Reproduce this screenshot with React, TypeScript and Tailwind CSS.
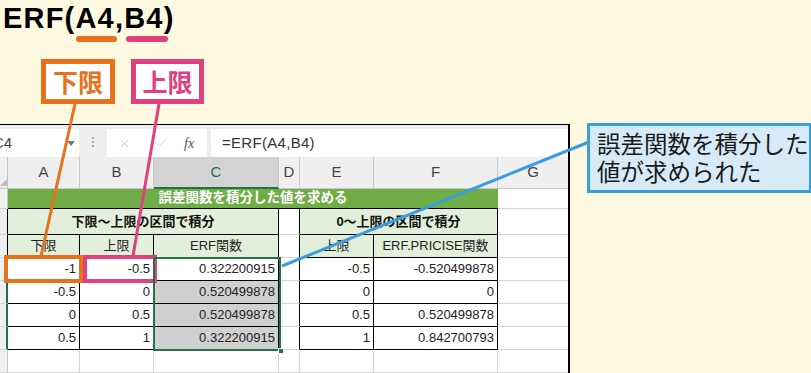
import { Check, X } from "lucide-react";

const font = "font-['Liberation_Sans','Noto_Sans_CJK_JP',sans-serif]";

/**
 * Row header cell (the cut-off row numbers on the far left)
 */
function RowHead({ className = "" }: { className?: string }) {
  return <div className={`w-[8px] shrink-0 bg-[#efefef] border-b border-[#d4d4d4] ${className}`} />;
}

function DataRow({
  a,
  b,
  c,
  e,
  f,
  gray,
}: {
  a: string;
  b: string;
  c: string;
  e: string;
  f: string;
  gray?: boolean;
}) {
  return (
    <div className="flex h-[23px] text-[13px] text-[#222]">
      <RowHead className="border-r-2 border-r-[#217346] bg-[#d6d6d6]" />
      <div className="w-[72px] flex items-center justify-end pr-[3px] bg-white border-r border-b border-black">{a}</div>
      <div className="w-[74px] flex items-center justify-end pr-[3px] bg-white border-r border-b border-black">{b}</div>
      <div
        className={`w-[125px] flex items-center justify-end pr-[3px] border-r border-b border-black ${
          gray ? "bg-[#d0d0d0]" : "bg-white"
        }`}
      >
        {c}
      </div>
      <div className="w-[21px] bg-white border-r border-r-black border-b border-b-[#d4d4d4]" />
      <div className="w-[74px] flex items-center justify-end pr-[3px] bg-white border-r border-b border-black">{e}</div>
      <div className="w-[124px] flex items-center justify-end pr-[3px] bg-white border-r border-b border-black">{f}</div>
      <div className="w-[70px] bg-white border-b border-[#d4d4d4]" />
    </div>
  );
}

function Spreadsheet() {
  return (
    <div className={`w-[570px] h-[249px] shrink-0 border-t border-r-2 border-black bg-white ${font}`}>
      {/* formula bar */}
      <div className="flex h-[32px] pt-[4px] bg-[#eeeeee]">
        <div className="w-[79px] h-[28px] bg-white flex items-center overflow-hidden relative">
          <span className="ml-[-7px] text-[15px] text-[#444]">C4</span>
          <span className="absolute left-[67px] top-[12px] border-x-[4px] border-x-transparent border-t-[5px] border-t-[#777]" />
        </div>
        <div className="w-[28px] flex flex-col items-center justify-center gap-[2px] pb-[2px]">
          <span className="w-[2px] h-[2px] bg-[#aaa]" />
          <span className="w-[2px] h-[2px] bg-[#aaa]" />
          <span className="w-[2px] h-[2px] bg-[#aaa]" />
        </div>
        <div className="w-[100px] h-[28px] bg-white flex items-center">
          <X className="ml-[11px] w-[13px] h-[13px] text-[#bdbdbd]" strokeWidth={1.6} />
          <Check className="ml-[23px] w-[14px] h-[14px] text-[#d0d0d0]" strokeWidth={1.6} />
          <span className="ml-[16px] font-['Liberation_Serif',serif] italic text-[14px] text-[#555]">fx</span>
        </div>
        <div className="ml-[4px] w-[357px] h-[28px] bg-white flex items-center pl-[11px] text-[15px] text-[#333] tracking-[0.3px]">
          =ERF(A4,B4)
        </div>
      </div>

      {/* column headers */}
      <div className="flex h-[32px] text-[15px] text-[#444]">
        <div className="w-[8px] bg-[#efefef] border-r border-b border-[#c6c6c6] flex items-end justify-end">
          <span className="border-l-[7px] border-l-transparent border-b-[7px] border-b-[#bdbdbd] mb-[2px]" />
        </div>
        <div className="w-[72px] flex items-center justify-center bg-[#efefef] border-r border-b border-[#c9c9c9]">A</div>
        <div className="w-[74px] flex items-center justify-center bg-[#efefef] border-r border-b border-[#c9c9c9]">B</div>
        <div className="w-[125px] flex items-center justify-center bg-[#d4d4d4] border-r border-r-[#c9c9c9] border-b-2 border-b-[#217346] text-[#217346]">
          C
        </div>
        <div className="w-[21px] flex items-center justify-center bg-[#efefef] border-r border-b border-[#c9c9c9]">D</div>
        <div className="w-[74px] flex items-center justify-center bg-[#efefef] border-r border-b border-[#c9c9c9]">E</div>
        <div className="w-[124px] flex items-center justify-center bg-[#efefef] border-r border-b border-[#c9c9c9]">F</div>
        <div className="w-[70px] flex items-center justify-center bg-[#efefef] border-b border-[#c9c9c9]">G</div>
      </div>

      {/* row 1: title banner */}
      <div className="flex h-[20px]">
        <RowHead className="border-r border-r-[#c6c6c6]" />
        <div className="w-[490px] flex items-center justify-center bg-[#70ad47] border-b border-black text-white font-bold text-[13.5px]">
          誤差関数を積分した値を求める
        </div>
        <div className="w-[70px] bg-white border-b border-[#d4d4d4]" />
      </div>

      {/* row 2 */}
      <div className="flex h-[26px] text-[13px] font-bold text-[#111]">
        <RowHead className="border-r border-r-black" />
        <div className="w-[271px] flex items-center justify-center bg-[#e2efda] border-r border-b border-black">
          下限～上限の区間で積分
        </div>
        <div className="w-[21px] bg-white border-r border-r-black border-b border-b-[#d4d4d4]" />
        <div className="w-[198px] flex items-center justify-center bg-[#e2efda] border-r border-b border-black">
          0～上限の区間で積分
        </div>
        <div className="w-[70px] bg-white border-b border-[#d4d4d4]" />
      </div>

      {/* row 3 */}
      <div className="flex h-[23px] text-[13px] text-[#222]">
        <RowHead className="border-r border-r-black" />
        <div className="w-[72px] flex items-center justify-center bg-[#e2efda] border-r border-b border-black">下限</div>
        <div className="w-[74px] flex items-center justify-center bg-[#e2efda] border-r border-b border-black">上限</div>
        <div className="w-[125px] flex items-center justify-center bg-[#e2efda] border-r border-b border-black">ERF関数</div>
        <div className="w-[21px] bg-white border-r border-r-black border-b border-b-[#d4d4d4]" />
        <div className="w-[74px] flex items-center justify-center bg-[#e2efda] border-r border-b border-black">上限</div>
        <div className="w-[124px] flex items-center justify-center bg-[#e2efda] border-r border-b border-black">
          ERF.PRICISE関数
        </div>
        <div className="w-[70px] bg-white border-b border-[#d4d4d4]" />
      </div>

      <DataRow a="-1" b="-0.5" c="0.322200915" e="-0.5" f="-0.520499878" />
      <DataRow a="-0.5" b="0" c="0.520499878" e="0" f="0" gray />
      <DataRow a="0" b="0.5" c="0.520499878" e="0.5" f="0.520499878" gray />
      <DataRow a="0.5" b="1" c="0.322200915" e="1" f="0.842700793" gray />

      {/* row 8: empty */}
      <div className="flex h-[23px]">
        <RowHead className="border-r border-r-[#c6c6c6]" />
        <div className="w-[72px] border-r border-b border-[#d4d4d4]" />
        <div className="w-[74px] border-r border-b border-[#d4d4d4]" />
        <div className="w-[125px] border-r border-b border-[#d4d4d4]" />
        <div className="w-[21px] border-r border-b border-[#d4d4d4]" />
        <div className="w-[74px] border-r border-b border-[#d4d4d4]" />
        <div className="w-[124px] border-r border-b border-[#d4d4d4]" />
        <div className="w-[70px] border-b border-[#d4d4d4]" />
      </div>
    </div>
  );
}

export default function App() {
  return (
    <div className={`relative w-[811px] h-[373px] overflow-hidden bg-[#fdf9e1] ${font}`}>
      {/* heading */}
      <div className="pl-[3px] h-[37px] text-[29px] leading-[37px] font-bold tracking-[1.2px] text-black font-['Liberation_Sans',sans-serif]">
        ERF(A4,B4)
      </div>
      <div className="flex mt-[-1px] h-[6px]">
        <div className="ml-[76px] w-[41px] rounded-full bg-[#e8711b]" />
        <div className="ml-[9px] w-[42px] rounded-full bg-[#e0407f]" />
      </div>
      <div className="flex mt-[17px] h-[45px]">
        <div className="ml-[41px] w-[74px] border-[5px] border-[#e8711b] bg-white flex items-center justify-center text-[25px] font-bold text-[#e8711b] font-['Noto_Sans_CJK_JP',sans-serif]">
          下限
        </div>
        <div className="ml-[16px] w-[73px] border-[5px] border-[#e0407f] bg-white flex items-center justify-center text-[25px] font-bold text-[#e0407f] font-['Noto_Sans_CJK_JP',sans-serif]">
          上限
        </div>
      </div>

      <div className="flex items-start mt-[20px]">
        <Spreadsheet />
        <div className="ml-[17px] mt-[-1px] w-[240px] h-[70px] border-[3px] border-[#3d9be0] bg-[#d6eaf8] pl-[7px] pt-[3px] text-[23.5px] leading-[28px] text-[#1a1a1a] font-['Noto_Sans_CJK_JP',sans-serif] whitespace-nowrap">
          <div>誤差関数を積分した</div>
          <div>値が求められた</div>
        </div>
      </div>

      {/* highlight frames over cells */}
      <div className="absolute left-[4px] top-[255px] w-[79px] h-[28px] border-[4px] border-[#e8711b]" />
      <div className="absolute left-[83px] top-[255px] w-[74px] h-[28px] border-[4px] border-[#e0407f]" />
      <div className="absolute left-[153px] top-[257px] w-[128px] h-[94px] border-2 border-[#217346]" />
      <div className="absolute left-[278px] top-[348px] w-[6px] h-[6px] bg-[#217346] border border-white" />

      {/* leader lines */}
      <svg className="absolute inset-0 pointer-events-none" width="811" height="373">
        <line x1="75" y1="104" x2="41" y2="256" stroke="#e8711b" strokeWidth="3" />
        <line x1="159" y1="104" x2="133" y2="256" stroke="#e0407f" strokeWidth="3" />
        <line x1="282" y1="266" x2="589" y2="142" stroke="#3b9de0" strokeWidth="3" />
      </svg>
    </div>
  );
}
